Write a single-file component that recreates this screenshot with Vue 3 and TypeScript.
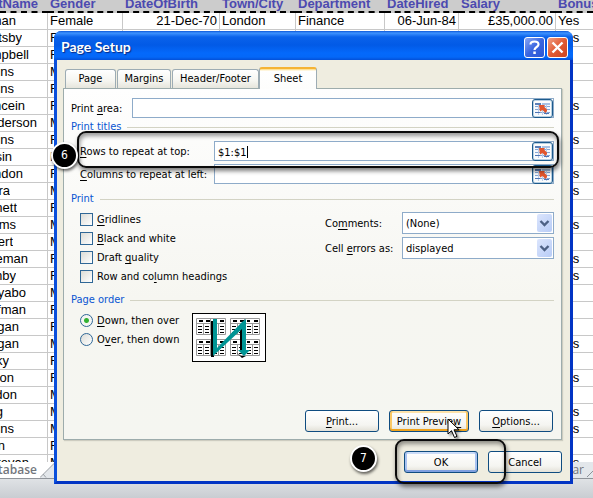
<script setup lang="ts">
import { ref } from 'vue'

interface Row {
  name: string
  end: number
  gender: string
  bonus: string
}

const columns: string[] = ['Gender', 'DateOfBirth', 'Town/City', 'Department', 'DateHired', 'Salary', 'Bonus']

const first = {
  name: 'man',
  end: 16,
  cells: ['Female', '21-Dec-70', 'London', 'Finance', '06-Jun-84', '£35,000.00', 'Yes'],
}

const make = (name: string, end: number, gender: string, bonus: string): Row => ({ name, end, gender, bonus })

const rows: Row[] = [
  make('tsby', 22, 'F', 'Yes'),
  make('mpbell', 29, 'F', ''),
  make('ins', 14, 'M', ''),
  make('ins', 14, 'F', ''),
  make('ncein', 25, 'F', 'Yes'),
  make('nderson', 37, 'M', ''),
  make('ins', 14, 'F', 'Yes'),
  make('sin', 12, 'M', ''),
  make('ndon', 23, 'F', 'Yes'),
  make('ara', 10, 'M', 'Yes'),
  make('nett', 17, 'F', ''),
  make('ams', 16, 'M', 'Yes'),
  make('bert', 13, 'M', ''),
  make('eman', 28, 'F', 'Yes'),
  make('mby', 16, 'F', 'Yes'),
  make('yabo', 26, 'M', ''),
  make('ffman', 26, 'F', ''),
  make('rgan', 19, 'F', ''),
  make('rgan', 19, 'M', 'Yes'),
  make('cky', 9, 'F', ''),
  make('son', 14, 'F', 'Yes'),
  make('ndon', 17, 'M', ''),
  make('ng', 3, 'M', 'Yes'),
  make('ins', 14, 'M', 'Yes'),
  make('on', 5, 'F', ''),
  make('Stevan', 29, 'M', 'Yes'),
]

const printArea = ref('')
const titleRows = ref('$1:$1')
const titleColumns = ref('')
const comments = ref('(None)')
const cellErrors = ref('displayed')
const order = ref('down')

const options = [
  { id: 'grid', before: '', key: 'G', after: 'ridlines' },
  { id: 'bw', before: '', key: 'B', after: 'lack and white' },
  { id: 'draft', before: 'Draft ', key: 'q', after: 'uality' },
  { id: 'heads', before: 'Row and co', key: 'l', after: 'umn headings' },
]

const pages = [
  [0, 0],
  [34, 0],
  [0, 21],
  [34, 21],
]
</script>

<template>
  <main class="screen">
    <svg class="defs" width="0" height="0" aria-hidden="true">
      <symbol id="picker" viewBox="0 0 17 15">
        <rect x="1" y="2" width="15" height="12" fill="#f4f8fd" />
        <rect x="1" y="2" width="6" height="2" fill="#5b7fb8" />
        <rect x="8" y="2" width="8" height="2" fill="#a9c2e4" />
        <path d="M1 5.5H16M1 8.5H16M1 11.5H16" stroke="#86a6d4" />
        <path d="M4.500 4V14M8.500 4V14M12.500 4V14" stroke="#b9cde8" />
        <path d="M1 11.500H6M10 12.500H15" stroke="#4f75b4" />
        <path d="M5 4H11L10 5.500L13 8.500V10L11.500 12L8.500 9L6 10.500Z" fill="#e2562d" />
      </symbol>
      <symbol id="chevron" viewBox="0 0 15 18">
        <path d="M3.500 7L7.500 11L11.500 7" fill="none" stroke="#4d6185" stroke-width="2.400" />
      </symbol>
    </svg>

    <div class="sheet">
      <table class="grid">
        <colgroup>
          <col class="c-name" /><col class="c-gender" /><col class="c-dob" /><col class="c-town" />
          <col class="c-dept" /><col class="c-hired" /><col class="c-salary" /><col />
        </colgroup>
        <thead>
          <tr>
            <th><div class="clip" :style="{ width: '38px' }">tName</div></th>
            <th v-for="c in columns" :key="c">{{ c }}</th>
          </tr>
        </thead>
        <tbody>
          <tr>
            <td><div class="clip" :style="{ width: first.end + 'px' }">{{ first.name }}</div></td>
            <td v-for="(c, i) in first.cells" :key="i" :class="{ num: i === 1 || i === 4 || i === 5 }">{{ c }}</td>
          </tr>
          <tr v-for="(r, i) in rows" :key="i">
            <td><div class="clip" :style="{ width: r.end + 'px' }">{{ r.name }}</div></td>
            <td>{{ r.gender }}</td>
            <td></td><td></td><td></td><td></td><td></td>
            <td>{{ r.bonus }}</td>
          </tr>
        </tbody>
      </table>
    </div>
    <nav class="sheet-tabs">
      <span class="sheet-tab">tabase</span>
      <svg class="slope" width="20" height="16" aria-hidden="true">
        <path d="M0 15.500L15 .5H20V16H0Z" fill="#e3e7eb" />
        <path d="M0 15.500L15 .5M3 12L6 15.500" fill="none" stroke="#9ba0a6" />
      </svg>
      <span class="far-tab">ar</span>
      <svg width="9" height="16" aria-hidden="true">
        <path d="M3 15L12 6" stroke="#8d9299" />
      </svg>
    </nav>
    <div class="status"></div>

    <section class="dialog" role="dialog" aria-labelledby="dialog-title">
      <header class="title-bar">
        <h1 id="dialog-title">Page Setup</h1>
        <button class="cap help" type="button" aria-label="Help">
          <svg width="19" height="19" viewBox="0 0 19 19">
            <path d="M5.500 6.500C5.500 2.500 13.500 2.500 13.500 6.500C13.500 9 9.500 9 9.500 12" fill="none" stroke="#fff" stroke-width="2.200" />
            <rect x="8.300" y="13.500" width="2.500" height="2.500" fill="#fff" />
          </svg>
        </button>
        <button class="cap close" type="button" aria-label="Close">
          <svg width="19" height="19" viewBox="0 0 19 19">
            <path d="M4.500 4.500L14.500 14.500M14.500 4.500L4.500 14.500" stroke="#fff" stroke-width="2.400" />
          </svg>
        </button>
      </header>

      <div class="body">
        <div class="tabs" role="tablist">
          <button class="tab page" type="button" role="tab">Page</button>
          <button class="tab margins" type="button" role="tab">Margins</button>
          <button class="tab header" type="button" role="tab">Header/Footer</button>
          <button class="tab active" type="button" role="tab" aria-selected="true">Sheet</button>
        </div>

        <div class="panel" role="tabpanel">
          <div class="line area">
            <label for="area">Print <u>a</u>rea:</label>
            <div class="box">
              <input id="area" v-model="printArea" type="text" />
              <button class="pick" type="button" aria-label="Select print area"><svg width="17" height="15"><use href="#picker" /></svg></button>
            </div>
          </div>

          <h2>Print titles</h2>
          <div class="titles">
            <div class="line wide">
              <label for="rows"><u>R</u>ows to repeat at top:</label>
              <div class="box">
                <input id="rows" v-model="titleRows" type="text" />
                <span class="caret"></span>
                <button class="pick" type="button" aria-label="Select rows"><svg width="17" height="15"><use href="#picker" /></svg></button>
              </div>
              <span class="callout around-rows"></span>
              <span class="badge six">6</span>
            </div>
            <div class="line wide">
              <label for="cols"><u>C</u>olumns to repeat at left:</label>
              <div class="box">
                <input id="cols" v-model="titleColumns" type="text" />
                <button class="pick" type="button" aria-label="Select columns"><svg width="17" height="15"><use href="#picker" /></svg></button>
              </div>
            </div>
          </div>

          <h2>Print</h2>
          <div class="split">
            <div class="choices">
              <div v-for="o in options" :key="o.id" class="choice">
                <input :id="o.id" type="checkbox" />
                <label :for="o.id">{{ o.before }}<u>{{ o.key }}</u>{{ o.after }}</label>
              </div>
            </div>
            <div class="selects">
              <label for="comments">Co<u>m</u>ments:</label>
              <div class="drop">
                <select id="comments" v-model="comments"><option>(None)</option></select>
                <svg class="arrow" width="15" height="18"><use href="#chevron" /></svg>
              </div>
              <label for="errors">Cell <u>e</u>rrors as:</label>
              <div class="drop">
                <select id="errors" v-model="cellErrors"><option>displayed</option></select>
                <svg class="arrow" width="15" height="18"><use href="#chevron" /></svg>
              </div>
            </div>
          </div>

          <h2 class="order-title">Page order</h2>
          <div class="order">
            <div class="choices">
              <div class="choice">
                <input id="down" v-model="order" type="radio" name="order" value="down" />
                <label for="down"><u>D</u>own, then over</label>
              </div>
              <div class="choice">
                <input id="over" v-model="order" type="radio" name="order" value="over" />
                <label for="over">O<u>v</u>er, then down</label>
              </div>
            </div>
            <svg class="diagram" width="74" height="49" viewBox="0 0 74 49" aria-hidden="true">
              <rect x=".5" y=".5" width="73" height="48" fill="#fff" stroke="#000" />
              <g v-for="(p, i) in pages" :key="i" :transform="`translate(${p[0]} ${p[1]})`">
                <path d="M4.500 5.500H33.500V21.500H4.500ZM11.500 10V21M18.500 5V21M26.500 10V21M4 10.500H33" fill="none" stroke="#999" />
                <path d="M7 8H11M14 8H18M21 8H24M28 8H32" stroke="#000" stroke-width="2" />
                <path d="M6 13.500H10M6 16.500H10M6 19.500H10M13 13.500H17M13 16.500H17M13 19.500H17M21 13.500H25M21 16.500H25M21 19.500H25M28 13.500H32M28 16.500H32M28 19.500H32" stroke="#000" />
              </g>
              <path d="M19 8H22V44H19ZM48 14H52V38H48ZM44 39L49 43H54L50 45Z" fill="#000" />
              <path d="M21 6H25V35L50 9L54 6V37H58L52 43L46 37H50V16L21 43Z" fill="#009494" />
            </svg>
          </div>

          <div class="buttons">
            <button class="btn" type="button"><u>P</u>rint...</button>
            <button class="btn preview" type="button">
              Print Previe<u>w</u>
              <svg class="pointer" width="14" height="21" viewBox="0 0 14 21" aria-hidden="true">
                <path d="M1 1V16L4.500 12.700L7.500 19.500L10 18.300L7 11.800H12Z" fill="#fff" stroke="#000" />
              </svg>
            </button>
            <button class="btn" type="button"><u>O</u>ptions...</button>
          </div>
        </div>

        <footer class="buttons footer">
          <div class="ok-wrap">
            <button class="btn ok" type="button">OK</button>
            <span class="callout around-ok"></span>
            <span class="badge seven">7</span>
          </div>
          <button class="btn" type="button">Cancel</button>
        </footer>
      </div>
    </section>
  </main>
</template>

<style>
body {
  background: #fff;
}
</style>

<style scoped>
* {
  box-sizing: border-box;
}
.screen {
  position: relative;
  overflow: hidden;
  font-family: 'DejaVu Sans Condensed', 'DejaVu Sans', sans-serif;
  font-size: 11px;
  color: #000;
}
.defs {
  position: absolute;
}

/* Worksheet behind the dialog */
.sheet {
  height: 462px;
  overflow: hidden;
}
.grid {
  width: 100%;
  table-layout: fixed;
  border-collapse: separate;
  border-spacing: 0;
  font-family: 'Liberation Sans', Arial, sans-serif;
  font-size: 13px;
}
.c-name { width: 48px; }
.c-gender { width: 75px; }
.c-dob { width: 97px; }
.c-town { width: 76px; }
.c-dept { width: 89px; }
.c-hired { width: 74px; }
.c-salary { width: 97px; }
.grid th {
  height: 13px;
  padding: 0 2px;
  line-height: 8px;
  vertical-align: top;
  text-align: left;
  white-space: nowrap;
  color: #4c4ab0;
  background: #ccc;
  border-bottom: 2px dashed #000;
}
.grid td {
  height: 17px;
  padding: 0 2px;
  line-height: 16px;
  white-space: nowrap;
  overflow: hidden;
  border-right: 1px solid #c8c8c8;
  border-bottom: 1px solid #c8c8c8;
}
.grid td:last-child {
  border-right: 0;
}
.grid th:first-child,
.grid td:first-child {
  padding: 0;
}
.grid .num {
  text-align: right;
}
.clip {
  display: flex;
  justify-content: flex-end;
  overflow: hidden;
}
th .clip {
  overflow: visible;
}
.sheet-tabs {
  display: flex;
  height: 17px;
  background: #e3e7eb;
  border-bottom: 1px solid #8f949a;
  font-family: 'Open Sans', sans-serif;
  font-size: 12px;
  line-height: 15px;
  color: #72767c;
}
.sheet-tab {
  display: flex;
  justify-content: flex-end;
  width: 40px;
  padding-right: 3px;
  font-weight: 600;
  background: #fff;
}
.slope {
  background: #fff;
}
.far-tab {
  margin-left: auto;
}
.status {
  height: 19px;
  background: linear-gradient(#dfe2e5, #c9cdd2);
}

/* Dialog frame */
.dialog {
  position: absolute;
  top: 31px;
  left: 54px;
  right: 20px;
  border: 3px solid #0a4fdc;
  border-top: 0;
  border-right-color: #0234c4;
  border-bottom-color: #0234c4;
  border-radius: 8px 8px 0 0;
  background: #efede0;
}
.title-bar {
  display: flex;
  align-items: center;
  gap: 2px;
  height: 29px;
  margin: 0 -3px;
  padding: 3px 5px 0 7px;
  border-radius: 7px 7px 0 0;
  background: linear-gradient(#0a56d8 0, #3e93ff 2px, #0a62ea 6px, #025ae6 14px, #0469fb 22px, #0468f8 26px, #0350d8 29px);
}
h1 {
  flex: 1;
  margin: 0;
  font: bold 14px/18px Lato, sans-serif;
  color: #fff;
  text-shadow: 1px 1px 1px #0a2a80;
}
.cap {
  display: flex;
  align-items: center;
  justify-content: center;
  width: 21px;
  height: 21px;
  padding: 0;
  border: 1px solid #fff;
  border-radius: 3px;
}
.cap svg {
  flex: none;
}
.help {
  background: linear-gradient(135deg, #88a6f4, #3a66e0 50%, #2a56d4);
}
.close {
  background: linear-gradient(135deg, #f0a086, #e25b34 50%, #cc4420);
}
.body {
  padding: 7px 8px 8px 6px;
}
.tabs {
  display: flex;
  align-items: flex-end;
  gap: 1px;
  padding-left: 2px;
  height: 21px;
}
.tab {
  height: 19px;
  padding: 0;
  border: 1px solid #9dacb4;
  border-bottom: 0;
  border-radius: 3px 3px 0 0;
  background: linear-gradient(#fff, #f5f5f0 60%, #e6e5dc);
  font: inherit;
  line-height: 18px;
}
.page { width: 51px; }
.margins { width: 54px; }
.header { width: 87px; }
.active {
  position: relative;
  width: 58px;
  height: 22px;
  margin: 0 0 -1px -1px;
  border-top: 2px solid #f5b335;
  background: linear-gradient(#ffd873 0, #fff 2px, #fdfdfc);
}
.panel {
  padding: 9px 7px 7px;
  border: 1px solid #9dacac;
  background: linear-gradient(#fefefe, #f6f6f1 60%, #f5f6f1);
  box-shadow: 1px 1px 1px #cdccc0;
}
h2 {
  display: flex;
  align-items: center;
  gap: 6px;
  height: 16px;
  margin: 7px 0 3px;
  font: inherit;
  line-height: 16px;
  color: #0a55d2;
}
h2::after {
  content: '';
  flex: 1;
  height: 1px;
  background: #d3d3c4;
}
.area + h2 {
  margin-top: 1px;
}
.order-title {
  margin-top: 6px;
}
.line {
  position: relative;
  display: flex;
  align-items: center;
  height: 20px;
}
.line label {
  width: 61px;
  white-space: nowrap;
}
.wide label {
  width: 134px;
}
u {
  text-underline-offset: 2px;
  text-decoration-thickness: 1px;
  text-decoration-skip-ink: none;
}
.titles {
  display: flex;
  flex-direction: column;
  gap: 3px;
  padding: 3px 0 0 9px;
}
.box {
  position: relative;
  display: flex;
  flex: 1;
  height: 20px;
  border: 1px solid #8eabc9;
  background: #fff;
}
.box input {
  flex: 1;
  min-width: 0;
  padding: 2px 3px 0;
  border: 0;
  outline: 0;
  background: none;
  font: inherit;
}
.caret {
  position: absolute;
  top: 4px;
  left: 32px;
  width: 1px;
  height: 12px;
  background: #000;
}
.pick {
  display: flex;
  align-items: center;
  justify-content: center;
  width: 21px;
  height: 19px;
  padding: 0;
  border: 1px solid #1c5a8c;
  border-radius: 3px;
  background: #fdfdfb;
  box-shadow: inset 0 0 0 1px #b8d0e4;
}
.pick svg {
  flex: none;
}
.split {
  display: flex;
  justify-content: space-between;
  align-items: flex-start;
  padding-left: 9px;
}
.choice {
  display: flex;
  align-items: center;
  gap: 4px;
  height: 19px;
}
.choice input {
  appearance: none;
  width: 13px;
  height: 13px;
  margin: 0;
  border: 1px solid #2f6796;
  background: linear-gradient(135deg, #dcdcd6, #fff);
}
.choice input[type='radio'] {
  border-radius: 50%;
}
.choice input[type='radio']:checked {
  background: radial-gradient(circle, #2fb22f 0, #35b135 2px, #f4f5f2 3px);
}
.selects {
  display: grid;
  grid-template-columns: 77px 152px;
  gap: 3px 0;
  align-items: center;
  padding-top: 2px;
}
.drop {
  position: relative;
}
select {
  appearance: none;
  display: block;
  width: 100%;
  height: 22px;
  padding: 0 20px 0 3px;
  border: 1px solid #8eabc9;
  border-radius: 0;
  background: #fff;
  font: inherit;
  color: #000;
}
.arrow {
  position: absolute;
  top: 2px;
  right: 2px;
  border-radius: 2px;
  background: linear-gradient(135deg, #dbe5fd, #b8ccf6);
  pointer-events: none;
}
.order {
  display: flex;
  align-items: flex-start;
  padding-left: 9px;
}
.order .choices {
  width: 112px;
}
.diagram {
  margin-top: 2px;
}
.buttons {
  display: flex;
  justify-content: flex-end;
  gap: 10px;
  margin-top: 48px;
}
.panel .buttons {
  padding-right: 1px;
}
.footer {
  margin-top: 11px;
}
.btn {
  width: 74px;
  height: 22px;
  padding: 0;
  border: 1px solid #0f4c80;
  border-radius: 3px;
  background: linear-gradient(#fff, #f5f5f1 70%, #e3e1d8);
  font: inherit;
  color: #000;
  white-space: nowrap;
}
.preview {
  position: relative;
  width: 80px;
  box-shadow: inset 0 -2px 0 #efa31d, inset 2px 0 0 #fac866, inset -2px 0 0 #fac866, inset 0 2px 0 #fde3ab;
}
.pointer {
  position: absolute;
  top: 7px;
  left: 57px;
  filter: drop-shadow(2px 2px 1px rgba(0, 0, 0, 0.4));
}
.ok {
  display: block;
  box-shadow: inset 0 -2px 0 #7f9fe0, inset 2px 0 0 #a9c2f0, inset -2px 0 0 #a9c2f0, inset 0 2px 0 #cbdcf8;
}
.ok-wrap {
  position: relative;
}

/* Numbered annotations */
.callout {
  position: absolute;
  z-index: 2;
  border: 2px solid #0b0b0b;
  border-radius: 9px;
  box-shadow: 1px 3px 4px rgba(0, 0, 0, 0.5), inset 1px 3px 4px rgba(0, 0, 0, 0.4);
  pointer-events: none;
}
.around-rows {
  inset: -10px -5px -7px -3px;
}
.around-ok {
  inset: -12px -28px -11px -9px;
}
.badge {
  position: absolute;
  z-index: 3;
  width: 27px;
  height: 27px;
  border: 2px solid #fff;
  border-radius: 50%;
  background: #000;
  box-shadow: 1px 2px 3px rgba(0, 0, 0, 0.6);
  font-size: 12px;
  line-height: 23px;
  text-align: center;
  color: #fff;
}
.six {
  top: 1px;
  left: -29px;
}
.seven {
  top: -6px;
  left: -54px;
}
</style>
